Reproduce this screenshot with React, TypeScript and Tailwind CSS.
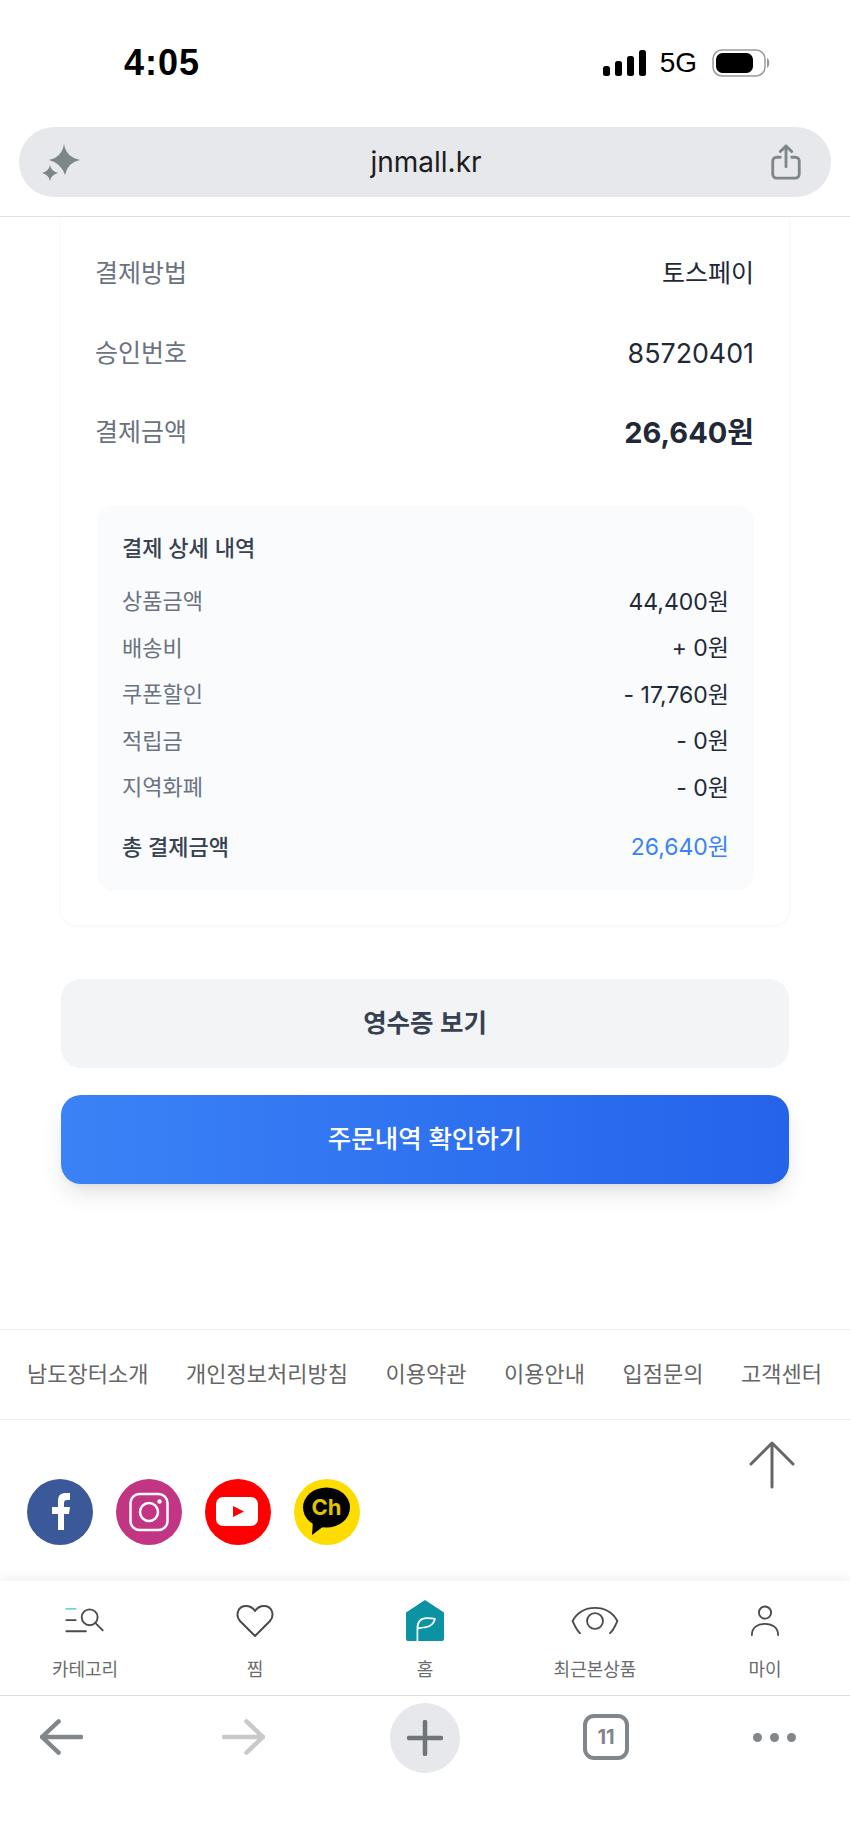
const cjk = "font-['Inter','Noto_Sans_CJK_KR',sans-serif]";

function Row({ label, value, kind }: { label: string; value: string; kind: "ko" | "num" | "big" }) {
  const cls =
    kind === "big"
      ? "text-[29px] font-bold text-[#1f2937]"
      : kind === "num"
        ? "text-[26.800px] font-normal text-[#1f2937]"
        : "text-[25px] font-normal text-[#1f2937]";
  return (
    <div className="flex h-[79.500px] items-center justify-between">
      <span className="text-[25px] text-[#6b7280]">{label}</span>
      <span className={cls}>{value}</span>
    </div>
  );
}

function Detail({ label, value }: { label: string; value: string }) {
  return (
    <div className="flex h-[46.500px] items-center justify-between">
      <span className="text-[22px] text-[#6b7280]">{label}</span>
      <span className="text-[23px] text-[#1f2937]">{value}</span>
    </div>
  );
}

function Sparkle() {
  return (
    <svg width="40" height="37" viewBox="0 0 40 37" fill="#7f8689">
      <path d="M22 0 Q24 13 38 16 Q26 18 23 31 Q19 19 7 16 Q20 13 22 0Z" />
      <path d="M8 21 Q9 27 16 29 Q9 31 8 37 Q7 31 0 29 Q7 27 8 21Z" />
    </svg>
  );
}

function Social() {
  return (
    <div className="flex gap-[23px]">
      <svg width="66" height="66" viewBox="0 0 66 66">
        <circle cx="33" cy="33" r="33" fill="#3b5998" />
        <path d="M31 51V35h-6v-7h6v-6c0-6 3-8 8-8h4v7h-3c-2 0-3 1-3 3v4h6l-1 7h-5v16z" fill="#fff" />
      </svg>
      <svg width="66" height="66" viewBox="0 0 66 66">
        <circle cx="33" cy="33" r="33" fill="#c13584" />
        <rect x="14.500" y="15" width="37" height="36" rx="9" fill="none" stroke="#fff" strokeWidth="2.500" />
        <circle cx="33" cy="33" r="9" fill="none" stroke="#fff" strokeWidth="2.500" />
        <circle cx="43.500" cy="22.500" r="2.200" fill="#fff" />
      </svg>
      <svg width="66" height="66" viewBox="0 0 66 66">
        <circle cx="33" cy="33" r="33" fill="#ff0000" />
        <rect x="11" y="18" width="42" height="29" rx="7" fill="#fff" />
        <path d="M28 27 L39 32.500 L28 38Z" fill="#ff0000" />
      </svg>
      <svg width="66" height="66" viewBox="0 0 66 66">
        <circle cx="33" cy="33" r="33" fill="#ffdc00" />
        <ellipse cx="32.500" cy="28.500" rx="23.500" ry="20" fill="#000" />
        <path d="M19 42 L18 56 L30 47Z" fill="#000" />
        <text x="32.500" y="36" textAnchor="middle" fontSize="22" fontWeight="700" fill="#e3c400" fontFamily="Inter, sans-serif">Ch</text>
      </svg>
    </div>
  );
}

function NavItem({ label, icon }: { label: string; icon: React.ReactNode }) {
  return (
    <div className="flex w-[170px] flex-col items-center">
      <div className="flex h-[48px] items-center justify-center">{icon}</div>
      <span className="mt-[13px] text-[18px] leading-[24px] text-[#6b6b6b]">{label}</span>
    </div>
  );
}

export default function App() {
  return (
    <div className={`${cjk} flex h-[1846px] w-[850px] flex-col overflow-hidden bg-white`}>
      {/* status bar */}
      <div className="flex h-[127px] items-start justify-between pl-[124px] pr-[78px] pt-[44px]">
        <span className="font-['Liberation_Sans',sans-serif] text-[36px] font-bold leading-[38px] tracking-[1px] text-black">4:05</span>
        <div className="flex h-[38px] items-center">
          <svg width="43" height="26" viewBox="0 0 43 26" fill="#000">
            <rect x="0" y="16" width="7" height="10" rx="2.500" />
            <rect x="12" y="11" width="7" height="15" rx="2.500" />
            <rect x="24" y="6" width="7" height="20" rx="2.500" />
            <rect x="36" y="0" width="7" height="26" rx="2.500" />
          </svg>
          <span className="ml-[14px] font-['Liberation_Sans',sans-serif] text-[28px] leading-[30px] text-black">5G</span>
          <svg width="60" height="28" viewBox="0 0 60 28" className="ml-[15px]">
            <rect x="1" y="1" width="52" height="26" rx="9" fill="none" stroke="#9a9a9a" strokeWidth="1.500" />
            <rect x="4" y="4" width="37" height="20" rx="6.500" fill="#000" />
            <path d="M55 9 C58 10 58 18 55 19Z" fill="#9a9a9a" />
          </svg>
        </div>
      </div>
      {/* address bar */}
      <div className="px-[19px]">
        <div className="flex h-[70px] items-center rounded-[35px] bg-[#e6e8eb] pl-[23px] pr-[29px]">
          <div className="w-[40px]">
            <Sparkle />
          </div>
          <span className="flex-1 text-center text-[28px] text-[#1c1c1c]">jnmall.kr</span>
          <svg width="32" height="36" viewBox="0 0 32 38" fill="none" stroke="#7f8689" strokeWidth="3" strokeLinecap="round" strokeLinejoin="round">
            <path d="M10 14H6a4 4 0 0 0-4 4v14a4 4 0 0 0 4 4h20a4 4 0 0 0 4-4V18a4 4 0 0 0-4-4h-4" />
            <path d="M16 24V2M10 8l6-6 6 6" />
          </svg>
        </div>
      </div>
      <div className="mt-[19px] h-[1px] bg-[#dfe1e4]" />

      {/* receipt card */}
      <div className="px-[61px]">
        <div className="h-[708px] rounded-b-[16px] bg-white pl-[34px] pr-[35px] pt-[17px] shadow-[0_1px_4px_rgba(0,0,0,0.05)]">
          <Row label="결제방법" value="토스페이" kind="ko" />
          <Row label="승인번호" value="85720401" kind="num" />
          <Row label="결제금액" value="26,640원" kind="big" />
          <div className="ml-[2px] mt-[33px] h-[384px] rounded-[16px] bg-[#f9fbfd] px-[25px] pt-[24px]">
            <div className="flex h-[38px] items-center text-[22px] font-medium text-[#374151]">결제 상세 내역</div>
            <div className="mt-[11px]">
              <Detail label="상품금액" value="44,400원" />
              <Detail label="배송비" value="+ 0원" />
              <Detail label="쿠폰할인" value="- 17,760원" />
              <Detail label="적립금" value="- 0원" />
              <Detail label="지역화폐" value="- 0원" />
            </div>
            <div className="mt-[13px] flex h-[46px] items-center justify-between">
              <span className="text-[22px] font-medium text-[#374151]">총 결제금액</span>
              <span className="text-[23px] text-[#3b82f6]">26,640원</span>
            </div>
          </div>
        </div>

        <div className="mt-[54px] flex h-[89px] items-center justify-center rounded-[20px] bg-[#f3f4f6] text-[25.500px] font-semibold text-[#374151]">영수증 보기</div>
        <div className="mt-[27px] flex h-[89px] items-center justify-center rounded-[20px] bg-gradient-to-r from-[#3b82f6] to-[#2563eb] text-[25.500px] font-medium text-white shadow-[0_12px_24px_-4px_rgba(0,0,0,0.12),0_4px_8px_-4px_rgba(0,0,0,0.08)]">주문내역 확인하기</div>
      </div>

      {/* footer */}
      <div className="mt-[145px] flex h-[91px] items-center justify-between border-y border-[#ececec] pl-[27px] pr-[28px] text-[22px] text-[#666666]">
        <span>남도장터소개</span>
        <span>개인정보처리방침</span>
        <span>이용약관</span>
        <span>이용안내</span>
        <span>입점문의</span>
        <span>고객센터</span>
      </div>
      <div className="flex h-[161px] items-start justify-between pl-[27px] pr-[55px]">
        <div className="pt-[59px]">
          <Social />
        </div>
        <svg width="46" height="48" viewBox="0 0 46 48" className="mt-[21px]" fill="none" stroke="#666666" strokeWidth="3" strokeLinecap="round" strokeLinejoin="round">
          <path d="M23 46V2M2 23L23 2l21 21" />
        </svg>
      </div>

      {/* site nav */}
      <div className="flex h-[115px] items-start justify-between border-b border-[#dddddd] pt-[16px] shadow-[0_-6px_8px_rgba(0,0,0,0.04)]">
        <NavItem
          label="카테고리"
          icon={
            <svg width="42" height="28" viewBox="0 0 44 30" fill="none" stroke="#4a4a4a" strokeWidth="2" strokeLinecap="round">
              <path d="M2 2h10" stroke="#79cfdc" />
              <path d="M2 14h10M2 26h21" />
              <circle cx="27" cy="11" r="8.500" />
              <path d="M33 17l8 8" />
            </svg>
          }
        />
        <NavItem
          label="찜"
          icon={
            <svg width="38" height="34" viewBox="0 0 38 34" fill="none" stroke="#4a4a4a" strokeWidth="2" strokeLinejoin="round">
              <path d="M19 32 L4 17 C-1 11 2 2 10 2 C14 2 17 4 19 7 C21 4 24 2 28 2 C36 2 39 11 34 17Z" />
            </svg>
          }
        />
        <NavItem
          label="홈"
          icon={
            <svg width="38" height="44" viewBox="0 0 40 44">
              <path d="M20 0 L40 13 V41 a2 2 0 0 1-2 2 H2 a2 2 0 0 1-2-2 V13Z" fill="#0b93a3" />
              <path d="M12 43 V30 C12 22 16 19 22 19 C25 19 28 19 30.500 20 C29 25 25 28 21 28.500 C18 29 15 29 13 30" fill="none" stroke="#fff" strokeWidth="1.800" strokeLinecap="round" />
            </svg>
          }
        />
        <NavItem
          label="최근본상품"
          icon={
            <svg width="48" height="28" viewBox="0 0 50 30" fill="none" stroke="#4a4a4a" strokeWidth="2" strokeLinecap="round">
              <path d="M9 28 C5 25 3 19 1 15 C6 6 15 1 25 1 C35 1 44 6 49 15 C47 19 45 25 41 28" />
              <circle cx="25" cy="15" r="8.500" />
            </svg>
          }
        />
        <NavItem
          label="마이"
          icon={
            <svg width="30" height="32" viewBox="0 0 32 34" fill="none" stroke="#4a4a4a" strokeWidth="2" strokeLinecap="round">
              <circle cx="16" cy="8" r="6.500" />
              <path d="M2 32 C2 24 8 20 16 20 C24 20 30 24 30 32" />
            </svg>
          }
        />
      </div>

      {/* browser toolbar */}
      <div className="flex items-start pl-[40px] pt-[7px]">
        <svg width="43" height="36" viewBox="0 0 44 36" className="mt-[16px]" fill="none" stroke="#80868a" strokeWidth="4.500" strokeLinecap="round" strokeLinejoin="round">
          <path d="M2 18h40M19 2L2 18l17 16" />
        </svg>
        <svg width="43" height="36" viewBox="0 0 44 36" className="ml-[139px] mt-[16px]" fill="none" stroke="#c8c9ca" strokeWidth="4.500" strokeLinecap="round" strokeLinejoin="round">
          <path d="M2 18h40M25 2l17 16-17 16" />
        </svg>
        <div className="ml-[125px] flex h-[70px] w-[70px] items-center justify-center rounded-full bg-[#e6e8eb]">
          <svg width="36" height="36" viewBox="0 0 36 36" stroke="#6f7579" strokeWidth="4.500" strokeLinecap="round">
            <path d="M18 2v32M2 18h32" />
          </svg>
        </div>
        <div className="ml-[123px] mt-[11px] flex h-[46px] w-[46px] items-center justify-center rounded-[11px] border-[4px] border-[#80868a] text-[20px] font-bold text-[#80868a]">11</div>
        <div className="ml-[124px] mt-[30px] flex gap-[8px]">
          <span className="h-[9px] w-[9px] rounded-full bg-[#80868a]" />
          <span className="h-[9px] w-[9px] rounded-full bg-[#80868a]" />
          <span className="h-[9px] w-[9px] rounded-full bg-[#80868a]" />
        </div>
      </div>
    </div>
  );
}
